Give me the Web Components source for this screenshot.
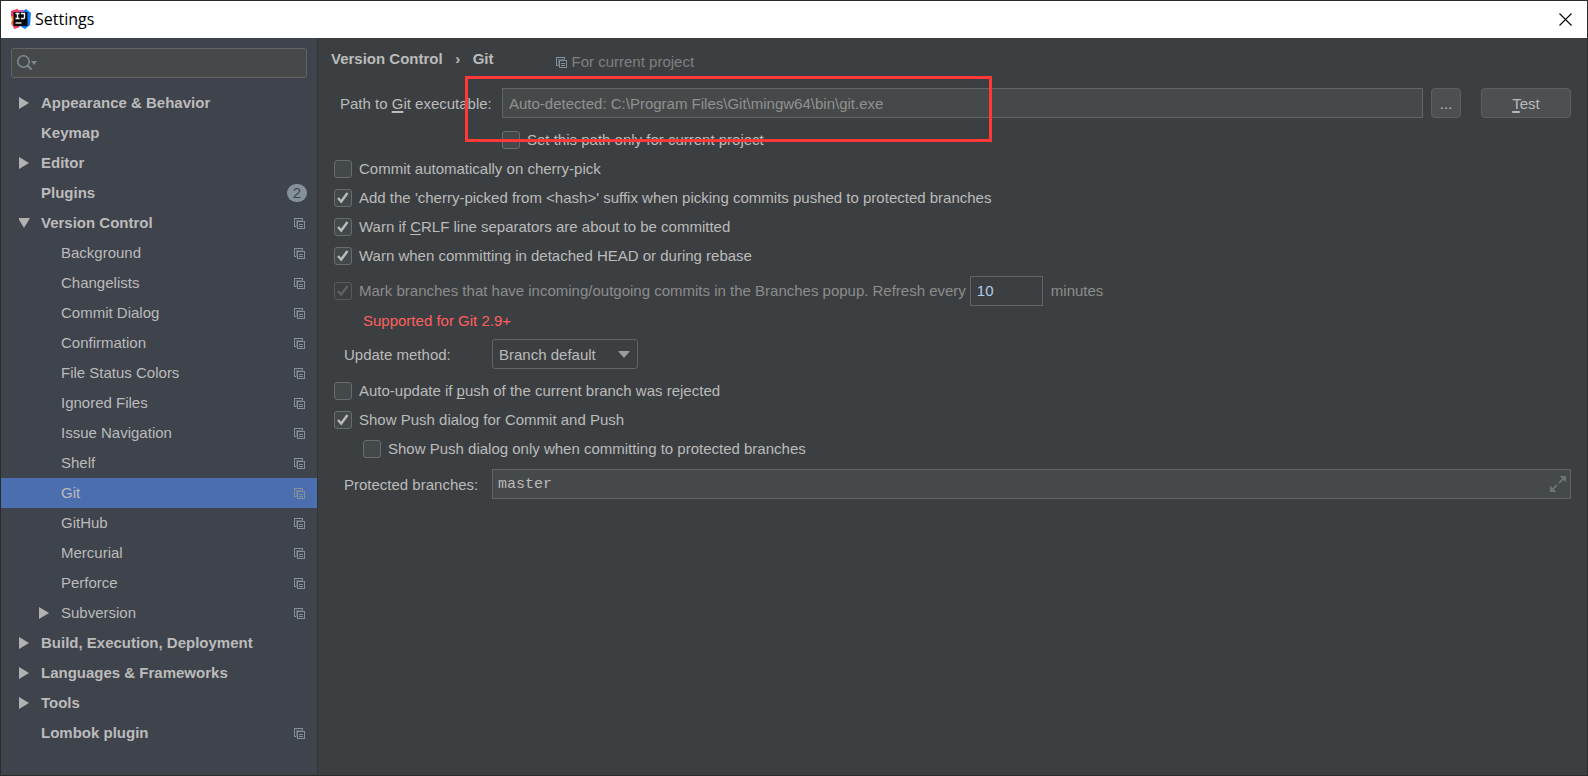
<!DOCTYPE html>
<html lang="en">
<head>
<meta charset="utf-8">
<title>Settings</title>
<style>
  :root {
    --panel: #3c3f41;
    --side: #3f434c;
    --field: #45494a;
    --line: #646464;
    --text: #bbbbbb;
    --muted: #8c8c8c;
    --icon: #84919c;
    --select: #4b6eaf;
  }
  html, body { margin: 0; height: 100%; }
  body {
    background: #2b2b2b;
    color: var(--text);
    font: 15px/20px "Liberation Sans", Arial, sans-serif;
  }
</style>
</head>
<body>
<app-window></app-window>

<script>
const define = (name, html, setup) => customElements.define(name, class extends HTMLElement {
  constructor() {
    super();
    this.attachShadow({ mode: "open" }).innerHTML = html;
  }
  connectedCallback() { if (setup) setup(this, this.shadowRoot); }
});

define("scope-icon", `
<style>
  :host { display: block; width: 11px; height: 11px; color: var(--icon); }
  svg { display: block; }
</style>
<svg width="11" height="11" viewBox="0 0 11 11" fill="none" stroke="currentColor" shape-rendering="crispEdges" aria-hidden="true">
  <path d="M2 8.500H.5V.5h8V2"/><path d="M2 2.500h7M2.500 3v6" stroke-opacity=".5"/>
  <path d="M3.500 3.500h7v7h-7z"/><path d="M5 6.500h4M5 8.500h4"/>
</svg>`);

define("title-bar", `
<style>
  :host { display: flex; align-items: center; box-sizing: border-box; height: 37px; background: #fff; color: #000; padding: 0 15px 1px 9px; }
  svg { display: block; }
  h1 { flex: 1; margin: 0 0 0 4px; font: 16px/24px "Open Sans", "Noto Sans", sans-serif; }
  button { border: 0; padding: 0; background: none; color: inherit; }
</style>
<svg width="21" height="20" viewBox="0 0 21 20" aria-hidden="true">
  <path d="M1 2 7 0l6 3 0 8-9 7-3-3 2-4-2-3z" fill="#f9375f"/>
  <path d="M1 7l4 1 1 7-3 2-2-3 1-3z" fill="#fc9234"/>
  <path d="M2 12l3 0 5 6-6 2z" fill="#f0325e"/>
  <path d="M11 3 16 0l5 4-1 12-5 4-5-3z" fill="#087cfa"/>
  <path d="M9 1l5 0-3 5z" fill="#c757bc"/>
  <path d="M3.500 3h14v14h-14z" fill="#0a0a0d"/>
  <path d="M5.500 4.500h4M7.500 4.500v5M5.500 9.500h4M11 4.500h3.500v4.200q0 .8-.8.8H11" fill="none" stroke="#fff" stroke-width="1.300"/>
  <path d="M5.500 14h6" stroke="#fff" stroke-width="1.300"/>
</svg>
<h1>Settings</h1>
<button type="button" aria-label="Close">
  <svg width="13" height="13" viewBox="0 0 13 13" stroke="#000" stroke-width="1.100"><path d="M.5.5l12 12M12.500.5l-12 12"/></svg>
</button>`);

define("search-box", `
<style>
  :host { display: flex; align-items: center; box-sizing: border-box; height: 30px; border: 1px solid var(--line); border-radius: 3px; background: var(--field); padding-left: 5px; }
  svg { flex: none; color: #7d8a91; }
  input { flex: 1; min-width: 0; border: 0; outline: 0; background: none; color: inherit; font: inherit; }
</style>
<svg width="20" height="16" viewBox="0 0 20 16" aria-hidden="true">
  <circle cx="6.500" cy="6.500" r="5.700" fill="none" stroke="currentColor" stroke-width="1.600"/>
  <path d="M10.500 10.500l4 4" stroke="currentColor" stroke-width="2"/>
  <path d="M14 6h6l-3 4z" fill="currentColor"/>
</svg>
<input type="search" aria-label="Search settings">`);

define("tree-row", `
<style>
  :host { display: block; }
  a { display: flex; align-items: center; height: 30px; padding: 0 12px 0 18px; color: inherit; text-decoration: none; }
  :host([level="1"]) a { padding-left: 38px; }
  :host([level="0"]) { font-weight: bold; }
  :host([selected]) { background: var(--select); }
  .arrow { width: 22px; height: 12px; flex: none; }
  .arrow svg { display: none; fill: #b2b2b2; }
  :host([arrow="right"]) .right, :host([arrow="down"]) .down { display: block; }
  .name { flex: 1; }
  scope-icon, .count { display: none; }
  :host([scoped]) scope-icon { display: block; }
  :host([count]) .count { display: block; width: 20px; border-radius: 9px; background: #84919c; color: #3f434c; text-align: center; font: 15px/18px "Liberation Sans", Arial, sans-serif; }
  :host([count]) a { padding-right: 10px; }
</style>
<a href="#">
  <span class="arrow">
    <svg class="right" width="12" height="12" viewBox="0 0 12 12"><path d="M0 0v12l10-6z"/></svg>
    <svg class="down" width="12" height="12" viewBox="0 0 12 12"><path d="M-1 1h12l-6 10z"/></svg>
  </span>
  <span class="name"><slot></slot></span>
  <span class="count"></span>
  <scope-icon></scope-icon>
</a>`, (host, root) => { root.querySelector(".count").textContent = host.getAttribute("count") || ""; });

define("settings-sidebar", `
<style>
  :host { display: block; box-sizing: border-box; background: var(--side); border-right: 1px solid #323538; padding: 10px 0; }
  search-box { margin: 0 10px 10px; }
</style>
<search-box></search-box>
<nav aria-label="Settings categories">
  <tree-row level="0" arrow="right">Appearance &amp; Behavior</tree-row>
  <tree-row level="0">Keymap</tree-row>
  <tree-row level="0" arrow="right">Editor</tree-row>
  <tree-row level="0" count="2">Plugins</tree-row>
  <tree-row level="0" arrow="down" scoped>Version Control</tree-row>
  <tree-row level="1" scoped>Background</tree-row>
  <tree-row level="1" scoped>Changelists</tree-row>
  <tree-row level="1" scoped>Commit Dialog</tree-row>
  <tree-row level="1" scoped>Confirmation</tree-row>
  <tree-row level="1" scoped>File Status Colors</tree-row>
  <tree-row level="1" scoped>Ignored Files</tree-row>
  <tree-row level="1" scoped>Issue Navigation</tree-row>
  <tree-row level="1" scoped>Shelf</tree-row>
  <tree-row level="1" scoped selected>Git</tree-row>
  <tree-row level="1" scoped>GitHub</tree-row>
  <tree-row level="1" scoped>Mercurial</tree-row>
  <tree-row level="1" scoped>Perforce</tree-row>
  <tree-row level="1" arrow="right" scoped>Subversion</tree-row>
  <tree-row level="0" arrow="right">Build, Execution, Deployment</tree-row>
  <tree-row level="0" arrow="right">Languages &amp; Frameworks</tree-row>
  <tree-row level="0" arrow="right">Tools</tree-row>
  <tree-row level="0" scoped>Lombok plugin</tree-row>
</nav>`);

define("check-option", `
<style>
  :host { display: block; }
  label { display: flex; align-items: center; gap: 7px; height: 29px; white-space: nowrap; }
  .box { display: grid; width: 18px; height: 18px; flex: none; }
  input, svg { grid-area: 1 / 1; }
  input { appearance: none; box-sizing: border-box; width: 18px; height: 18px; margin: 0; border: 1px solid #6b6b6b; border-radius: 3px; background: #43494a; }
  svg { display: none; pointer-events: none; }
  input:checked + svg { display: block; }
  :host([disabled]) { color: var(--muted); }
  :host([disabled]) input { background: none; border-color: #585a5b; }
  :host([disabled]) svg { color: #606060; }
</style>
<label><span class="box"><input type="checkbox"><svg width="18" height="18" viewBox="0 0 18 18" fill="none" stroke="currentColor" stroke-width="2.400"><path d="M4 9l3.200 3.500L13.500 4"/></svg></span><span><slot></slot></span></label>`,
(host, root) => {
  const input = root.querySelector("input");
  input.checked = host.hasAttribute("checked");
  input.disabled = host.hasAttribute("disabled");
});

define("page-header", `
<style>
  :host { display: flex; height: 39px; padding-top: 1px; }
  h2 { margin: 0; font-size: 15px; line-height: 20px; display: flex; }
  .sep { width: 30px; text-align: center; }
  .scope { display: flex; align-items: center; gap: 5px; height: 26px; margin-left: 62px; color: #808080; }
</style>
<h2><span>Version Control</span><span class="sep">›</span><span>Git</span></h2>
<div class="scope"><scope-icon></scope-icon><span>For current project</span></div>`);

define("path-row", `
<style>
  :host { display: grid; grid-template-columns: 162px 1fr 30px 110px; align-items: center; margin-left: 6px; }
  label { padding-top: 2px; }
  u { text-underline-offset: 2px; text-decoration-thickness: 2px; text-decoration-skip-ink: none; }
  .path { position: relative; margin-right: 8px; }
  input, button { box-sizing: border-box; height: 30px; border: 1px solid var(--line); font: inherit; }
  input { display: block; width: 100%; padding: 0 6px; background: var(--field); color: #919191; outline: 0; border-radius: 0; }
  input::placeholder { color: #919191; opacity: 1; }
  button { border-color: #5e6060; border-radius: 4px; background: #4c5052; color: var(--text); padding: 2px 0 0; }
  .test { margin-left: 20px; width: 90px; }
  .mark { position: absolute; left: -37px; top: -12px; width: 527px; height: 66px; box-sizing: border-box; border: 3px solid #ff3838; pointer-events: none; z-index: 1; }
</style>
<label for="path">Path to <u>G</u>it executable:</label>
<div class="path"><input id="path" type="text" placeholder="Auto-detected: C:\\Program Files\\Git\\mingw64\\bin\\git.exe"><div class="mark"></div></div>
<button type="button" aria-label="Browse">...</button>
<button type="button" class="test"><u>T</u>est</button>`);

define("refresh-row", `
<style>
  :host { display: flex; align-items: center; gap: 4px; height: 31px; margin-top: 5px; color: var(--muted); white-space: nowrap; }
  input { box-sizing: border-box; width: 73px; height: 30px; margin: 0 4px 0 0; padding: 0 6px; border: 1px solid var(--line); background: #3c3f41; color: #b4cbea; font: inherit; outline: 0; }
</style>
<check-option checked disabled>Mark branches that have incoming/outgoing commits in the Branches popup.</check-option>
<label for="every">Refresh every</label>
<input id="every" type="text" value="10">
<span>minutes</span>`);

define("method-row", `
<style>
  :host { display: grid; grid-template-columns: 148px 146px; align-items: center; margin: 4px 0 7px 10px; }
  label { padding-top: 2px; }
  .box { display: grid; align-items: center; }
  select, svg { grid-area: 1 / 1; }
  select { appearance: none; box-sizing: border-box; width: 100%; height: 30px; border: 1px solid var(--line); border-radius: 3px; padding: 2px 30px 0 6px; background: #3c3f41; color: inherit; font: inherit; outline: 0; }
  svg { justify-self: end; margin-right: 8px; pointer-events: none; fill: #9a9da0; }
</style>
<label for="method">Update method:</label>
<div class="box"><select id="method"><option>Branch default</option></select><svg width="12" height="8" viewBox="0 0 12 8"><path d="M0 1h12L6 8z"/></svg></div>`);

define("branches-row", `
<style>
  :host { display: grid; grid-template-columns: 148px 1fr; align-items: center; margin: 6px 0 0 10px; }
  label { padding-top: 2px; }
  .box { display: flex; align-items: center; box-sizing: border-box; height: 30px; border: 1px solid var(--line); background: var(--field); padding: 0 4px 0 5px; }
  input { flex: 1; min-width: 0; padding: 2px 0 0; border: 0; outline: 0; background: none; color: inherit; font: 15px/20px "Liberation Mono", "Courier New", monospace; }
  button { border: 0; padding: 0; background: none; }
  svg { display: block; }
</style>
<label for="branches">Protected branches:</label>
<div class="box"><input id="branches" type="text" value="master"><button type="button" aria-label="Expand"><svg width="16" height="16" viewBox="0 0 16 16" fill="#6b7377" stroke="#6b7377" stroke-width="1.800"><path d="M9.500 0H16v6.500zM0 9.500V16h6.500z" stroke="none"/><path d="M13 3 9 7M3 13l4-4"/></svg></button></div>`);

define("git-settings", `
<style>
  :host { display: block; background: var(--panel); padding: 10px 16px 20px; }
  u { text-underline-offset: 2px; text-decoration-thickness: 1px; text-decoration-skip-ink: none; }
  page-header { margin-left: -3px; }
  .local { margin: 7px 0 0 168px; }
  .note { margin: 0 0 0 29px; color: #ff5f5f; line-height: 29px; }
  .nested { margin-left: 29px; }
</style>
<page-header></page-header>
<path-row></path-row>
<check-option class="local">Set this path only for current project</check-option>
<check-option>Commit automatically on cherry-pick</check-option>
<check-option checked>Add the 'cherry-picked from &lt;hash&gt;' suffix when picking commits pushed to protected branches</check-option>
<check-option checked>Warn if <u>C</u>RLF line separators are about to be committed</check-option>
<check-option checked>Warn when committing in detached HEAD or during rebase</check-option>
<refresh-row></refresh-row>
<p class="note">Supported for Git 2.9+</p>
<method-row></method-row>
<check-option>Auto-update if <u>p</u>ush of the current branch was rejected</check-option>
<check-option checked>Show Push dialog for Commit and Push</check-option>
<check-option class="nested">Show Push dialog only when committing to protected branches</check-option>
<branches-row></branches-row>`);

define("app-window", `
<style>
  :host { display: flex; flex-direction: column; box-sizing: border-box; min-height: 100vh; padding: 1px; }
  .body { flex: 1; display: grid; grid-template-columns: 317px 1fr; }
  main { display: grid; }
</style>
<title-bar></title-bar>
<div class="body"><settings-sidebar></settings-sidebar><main><git-settings></git-settings></main></div>`);
</script>
</body>
</html>
